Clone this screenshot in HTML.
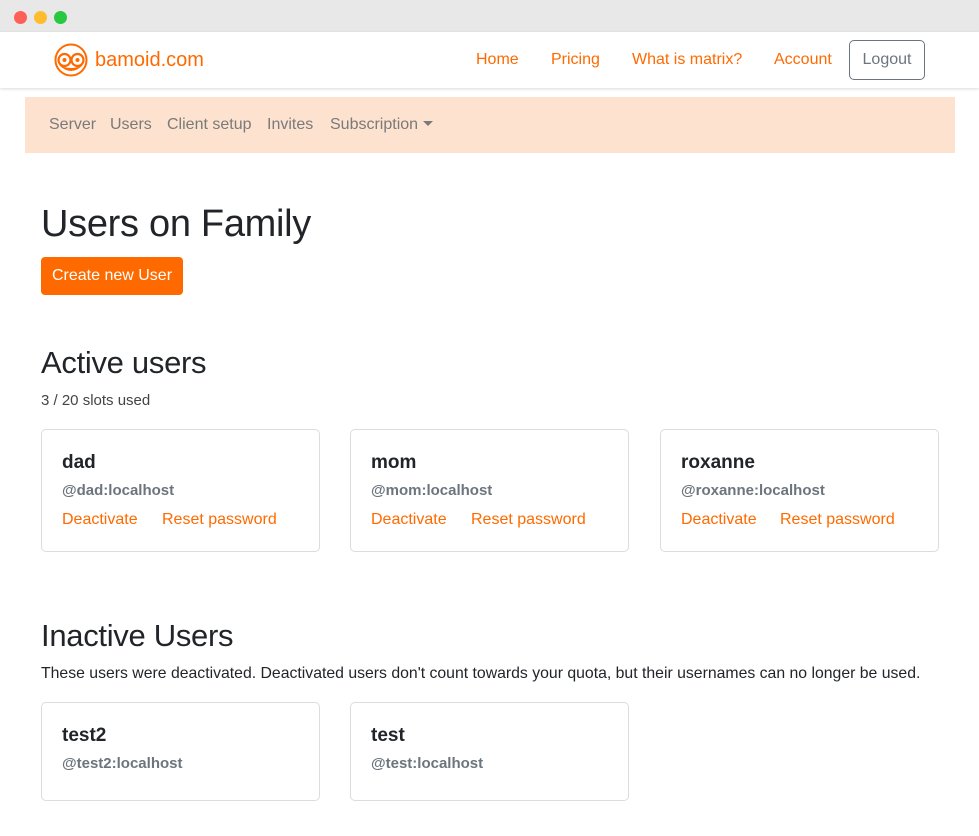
<!DOCTYPE html>
<html><head><style>
*{box-sizing:border-box;margin:0;padding:0}
body{width:979px;height:836px;background:#fff;font-family:"Liberation Sans",sans-serif;color:#212529;position:relative;overflow:hidden}
.top{position:absolute;left:0;top:0;width:979px;height:32px;background:#e8e8e8}
.dot{position:absolute;top:11px;width:13px;height:13px;border-radius:50%}
.nav{position:absolute;top:32px;left:0;width:979px;height:56px;background:#fff;box-shadow:0 1px 3px rgba(0,0,0,.15)}
.a{position:absolute;color:#ff6a00;font-size:16px}
.sub{position:absolute;left:25px;top:97px;width:930px;height:56px;background:#fde2cf}
.sub span{position:absolute;top:19px;color:#7a7a7a;font-size:16px}
.card{position:absolute;width:279px;border:1px solid #dcdcdc;border-radius:5px}
.card b{position:absolute;left:20px;top:22px;font-size:19px;font-weight:bold;color:#212529}
.card i{position:absolute;left:20px;top:52px;font-style:normal;font-weight:bold;color:#6c757d;font-size:15px}
.card .l{position:absolute;top:81px;color:#ff6a00;font-size:16px}
.h{position:absolute;left:41px;font-weight:300;letter-spacing:-0.3px}
</style></head><body>
<div class="top"><div class="dot" style="left:14px;background:#fe5f57"></div><div class="dot" style="left:34px;background:#febc2e"></div><div class="dot" style="left:54px;background:#28c840"></div></div>
<div class="nav">
<svg style="position:absolute;left:54px;top:11px" width="34" height="34" viewBox="0 0 34 34"><circle cx="17" cy="17" r="15.5" fill="none" stroke="#ff6a00" stroke-width="2"/><path d="M5 22 Q17 34 29 22 Q17 28 5 22Z" fill="#ff6a00"/><circle cx="10.5" cy="17" r="6" fill="#fff" stroke="#ff6a00" stroke-width="2.2"/><circle cx="23.5" cy="17" r="6" fill="#fff" stroke="#ff6a00" stroke-width="2.2"/><circle cx="10.5" cy="17" r="2" fill="#ff6a00"/><circle cx="23.5" cy="17" r="2" fill="#ff6a00"/></svg>
<span class="a" style="left:95px;top:17px;font-size:20px">bamoid.com</span>
<span class="a" style="left:476px;top:19px">Home</span>
<span class="a" style="left:551px;top:19px">Pricing</span>
<span class="a" style="left:632px;top:19px">What is matrix?</span>
<span class="a" style="left:774px;top:19px">Account</span>
<div style="position:absolute;left:849px;top:8px;width:76px;height:40px;border:1px solid #6c757d;border-radius:5px;color:#6c757d;font-size:16px;text-align:center;line-height:37px">Logout</div>
</div>
<div class="sub"><span style="left:24px">Server</span><span style="left:85px">Users</span><span style="left:142px">Client setup</span><span style="left:242px">Invites</span><span style="left:305px">Subscription <span style="position:relative;top:-3px;display:inline-block;border-left:5px solid transparent;border-right:5px solid transparent;border-top:5px solid #7a7a7a"></span></span></div>
<div class="h" style="top:203px;font-size:38px">Users on Family</div>
<div style="position:absolute;left:41px;top:257px;width:142px;height:38px;background:#ff6a00;border-radius:4px;color:#fff;font-size:16px;text-align:center;line-height:38px">Create new User</div>
<div class="h" style="top:345px;font-size:31px">Active users</div>
<div style="position:absolute;left:41px;top:392px;font-size:15px;color:#444">3 / 20 slots used</div>
<div class="card" style="left:41px;top:429px;height:123px"><b>dad</b><i>@dad:localhost</i><span class="l" style="left:20px">Deactivate</span><span class="l" style="left:120px">Reset password</span></div>
<div class="card" style="left:350px;top:429px;height:123px"><b>mom</b><i>@mom:localhost</i><span class="l" style="left:20px">Deactivate</span><span class="l" style="left:120px">Reset password</span></div>
<div class="card" style="left:660px;top:429px;height:123px"><b>roxanne</b><i>@roxanne:localhost</i><span class="l" style="left:20px">Deactivate</span><span class="l" style="left:119px">Reset password</span></div>
<div class="h" style="top:618px;font-size:31px">Inactive Users</div>
<div style="position:absolute;left:41px;top:665px;font-size:15.8px">These users were deactivated. Deactivated users don't count towards your quota, but their usernames can no longer be used.</div>
<div class="card" style="left:41px;top:702px;height:99px"><b>test2</b><i>@test2:localhost</i></div>
<div class="card" style="left:350px;top:702px;height:99px"><b>test</b><i>@test:localhost</i></div>
</body></html>
